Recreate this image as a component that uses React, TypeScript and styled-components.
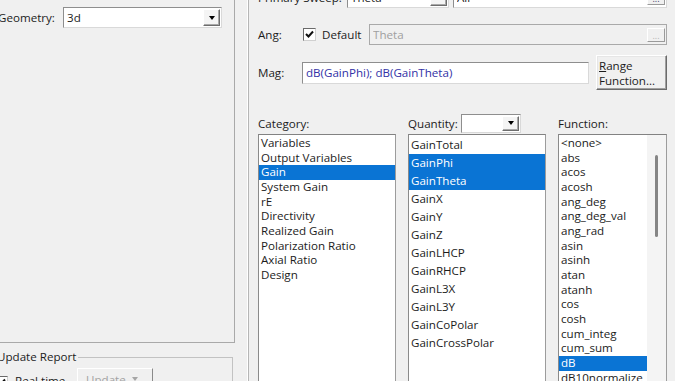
import React from "react";
import styled, { createGlobalStyle } from "styled-components";

const GlobalStyle = createGlobalStyle`
  html, body {
    margin: 0;
    padding: 0;
    background: #f0f0f0;
  }
  body {
    overflow: hidden;
    font-family: "Open Sans", "Noto Sans", sans-serif;
    font-size: 11.6px;
    color: #1c1c1c;
  }
`;

const Page = styled.div`
  display: flex;
  width: 675px;
  height: 381px;
  overflow: hidden;
  background: #f0f0f0;
`;

/* ---------- left side ---------- */

const LeftPane = styled.div`
  width: 235px;
  flex-shrink: 0;
  display: flex;
  flex-direction: column;
`;

const SettingsGroup = styled.div`
  height: 343px;
  flex-shrink: 0;
  box-sizing: border-box;
  border-right: 1px solid #a9a9a9;
  border-bottom: 1px solid #a9a9a9;
  padding-top: 7px;
`;

const FieldRow = styled.div`
  display: flex;
  align-items: center;
`;

const FieldLabel = styled.span<{ $w: number; $shift?: number }>`
  width: ${({ $w }) => $w}px;
  margin-left: ${({ $shift }) => $shift ?? 0}px;
  flex-shrink: 0;
  white-space: nowrap;
`;

const ComboBox = styled.div<{ $w: number; $h?: number }>`
  display: flex;
  width: ${({ $w }) => $w}px;
  height: ${({ $h }) => $h ?? 21}px;
  flex-shrink: 0;
  box-sizing: border-box;
  background: #fff;
  border: 1px solid #8e8e8e;
  border-right-color: #d9d9d9;
  border-bottom-color: #d9d9d9;
  padding: 1px;
`;

const ComboText = styled.span`
  flex: 1;
  display: flex;
  align-items: center;
  padding-left: 2px;
  white-space: nowrap;
`;

const DropButton = styled.span`
  width: 17px;
  box-sizing: border-box;
  display: flex;
  align-items: center;
  justify-content: center;
  background: #f4f4f4;
  border: 1px solid;
  border-color: #fff #6d6d6d #6d6d6d #fff;
  box-shadow: inset -1px -1px #a8a8a8;
`;

const DownArrow = styled.span<{ $muted?: boolean }>`
  width: 0;
  height: 0;
  border-left: 3.5px solid transparent;
  border-right: 3.5px solid transparent;
  border-top: 4px solid ${({ $muted }) => ($muted ? "#a6a6a6" : "#000")};
`;

const UpdateGroup = styled.fieldset`
  margin: 6px 2px 0 -12px;
  padding: 0 6px;
  min-width: 0;
  border: 1px solid #c2c2c2;
  flex: 1;
`;

const GroupLegend = styled.legend`
  padding: 0 2px;
  line-height: 16px;
`;

const UpdateRow = styled.div`
  display: flex;
  align-items: flex-start;
  margin-top: 3px;
`;

const CheckBox = styled.span<{ $top?: number }>`
  width: 13px;
  height: 13px;
  flex-shrink: 0;
  margin-top: ${({ $top }) => $top ?? 0}px;
  box-sizing: border-box;
  background: #fff;
  border: 1px solid #6a6a6a;
  border-right-color: #d0d0d0;
  border-bottom-color: #d0d0d0;
  display: flex;
  align-items: center;
  justify-content: center;
`;

const CheckLabel = styled.span<{ $w: number; $gap: number; $top?: number }>`
  width: ${({ $w }) => $w}px;
  margin-left: ${({ $gap }) => $gap}px;
  margin-top: ${({ $top }) => $top ?? 0}px;
  flex-shrink: 0;
  white-space: nowrap;
  line-height: 16px;
`;

const SplitButton = styled.span`
  width: 76px;
  height: 22px;
  box-sizing: border-box;
  display: flex;
  align-items: center;
  gap: 6px;
  padding-left: 8px;
  color: #a3a3a3;
  background: #f0f0f0;
  border: 1px solid;
  border-color: #fff #8a8a8a #8a8a8a #fff;
`;

/* ---------- right side ---------- */

const RightPane = styled.div`
  flex: 1;
  margin-left: 13px;
  border-left: 1px solid #b6b6b6;
  box-shadow: -1px 0 0 #fff;
  padding: 0 8px 0 9px;
  display: flex;
  flex-direction: column;
  min-width: 0;
`;

const FormRow = styled.div<{ $top: number; $h: number; $gap?: number }>`
  display: flex;
  align-items: center;
  height: ${({ $h }) => $h}px;
  margin-top: ${({ $top }) => $top}px;
  gap: ${({ $gap }) => $gap ?? 0}px;
  flex-shrink: 0;
`;

const TextField = styled.div<{ $h: number; $disabled?: boolean; $ink?: string }>`
  flex: 1;
  min-width: 0;
  display: flex;
  align-items: center;
  height: ${({ $h }) => $h}px;
  box-sizing: border-box;
  padding: 0 1px 0 3px;
  background: ${({ $disabled }) => ($disabled ? "#f0f0f0" : "#fff")};
  border: 1px solid ${({ $disabled }) => ($disabled ? "#a9a9a9" : "#8e8e8e")};
  border-right-color: ${({ $disabled }) => ($disabled ? "#a9a9a9" : "#d9d9d9")};
  border-bottom-color: ${({ $disabled }) => ($disabled ? "#a9a9a9" : "#d9d9d9")};
  color: ${({ $disabled, $ink }) => ($disabled ? "#a0a0a0" : $ink ?? "#1c1c1c")};
`;

const FieldText = styled.span`
  flex: 1;
  white-space: nowrap;
  overflow: hidden;
`;

const EllipsisButton = styled.span<{ $disabled?: boolean }>`
  width: 18px;
  height: 14px;
  box-sizing: border-box;
  display: flex;
  align-items: flex-end;
  justify-content: center;
  font-size: 9px;
  line-height: 10px;
  color: ${({ $disabled }) => ($disabled ? "#b5b5b5" : "#3b3b6b")};
  background: #f0f0f0;
  border: 1px solid;
  border-color: #fff #9a9a9a #9a9a9a #fff;
`;

const PushButton = styled.button`
  width: 71px;
  height: 35px;
  flex-shrink: 0;
  box-sizing: border-box;
  font: inherit;
  color: #1c1c1c;
  text-align: left;
  line-height: 15px;
  padding: 0 2px;
  background: #f0f0f0;
  border: 1px solid;
  border-color: #fff #6b6b6b #6b6b6b #fff;
  box-shadow: inset -1px -1px #a0a0a0, inset 1px 1px #e6e6e6;
`;

const ListsGrid = styled.div`
  display: grid;
  grid-template-columns: 138px 138px 109px;
  column-gap: 12px;
  margin-top: 22px;
`;

const ListColumn = styled.div`
  display: flex;
  flex-direction: column;
`;

const ListHeader = styled.div`
  height: 22px;
  display: flex;
  align-items: center;
`;

const ListBox = styled.div`
  height: 260px;
  display: flex;
  box-sizing: border-box;
  overflow: hidden;
  background: #fff;
  border: 1px solid #9c9c9c;
  border-top-color: #828282;
  border-left-color: #8a8a8a;
`;

const ListItems = styled.div`
  flex: 1;
  min-width: 0;
  padding-top: 1px;
`;

const ListItem = styled.div<{ $lh: number; $selected?: boolean }>`
  height: ${({ $lh }) => $lh}px;
  line-height: ${({ $lh }) => $lh}px;
  padding-left: 2px;
  white-space: nowrap;
  color: ${({ $selected }) => ($selected ? "#fff" : "#1c1c1c")};
  background: ${({ $selected }) => ($selected ? "#0a74d4" : "transparent")};
`;

const ScrollTrack = styled.div`
  width: 19px;
  flex-shrink: 0;
  background: #f4f4f4;
  display: flex;
  justify-content: center;
  padding-top: 20px;
`;

const ScrollThumb = styled.div`
  width: 3px;
  height: 82px;
  border-radius: 2px;
  background: #858585;
`;

const categories = [
  "Variables",
  "Output Variables",
  "Gain",
  "System Gain",
  "rE",
  "Directivity",
  "Realized Gain",
  "Polarization Ratio",
  "Axial Ratio",
  "Design",
];

const quantities = [
  "GainTotal",
  "GainPhi",
  "GainTheta",
  "GainX",
  "GainY",
  "GainZ",
  "GainLHCP",
  "GainRHCP",
  "GainL3X",
  "GainL3Y",
  "GainCoPolar",
  "GainCrossPolar",
];

const functions = [
  "<none>",
  "abs",
  "acos",
  "acosh",
  "ang_deg",
  "ang_deg_val",
  "ang_rad",
  "asin",
  "asinh",
  "atan",
  "atanh",
  "cos",
  "cosh",
  "cum_integ",
  "cum_sum",
  "dB",
  "dB10normalize",
];

const Tick = () => (
  <svg width="9" height="9" viewBox="0 0 9 9">
    <polyline points="1,4 3.5,6.5 8,1.5" fill="none" stroke="#111" strokeWidth="2" />
  </svg>
);

const App = () => {
  return (
    <Page>
      <GlobalStyle />
      <LeftPane>
        <SettingsGroup>
          <FieldRow>
            <FieldLabel $w={65} $shift={-2}>Geometry:</FieldLabel>
            <ComboBox $w={159}>
              <ComboText>3d</ComboText>
              <DropButton><DownArrow /></DropButton>
            </ComboBox>
          </FieldRow>
        </SettingsGroup>
        <UpdateGroup>
          <GroupLegend>Update Report</GroupLegend>
          <UpdateRow>
            <CheckBox $top={8}><Tick /></CheckBox>
            <CheckLabel $w={62} $gap={7} $top={5}>Real time</CheckLabel>
            <SplitButton>Update <DownArrow $muted /></SplitButton>
          </UpdateRow>
        </UpdateGroup>
      </LeftPane>

      <RightPane>
        <FormRow $top={-13} $h={21}>
          <FieldLabel $w={89}>Primary Sweep:</FieldLabel>
          <ComboBox $w={102}>
            <ComboText>Theta</ComboText>
            <DropButton><DownArrow /></DropButton>
          </ComboBox>
          <FieldLabel $w={4} />
          <TextField $h={21}>
            <FieldText>All</FieldText>
            <EllipsisButton>...</EllipsisButton>
          </TextField>
        </FormRow>

        <FormRow $top={16} $h={21}>
          <FieldLabel $w={45}>Ang:</FieldLabel>
          <CheckBox><Tick /></CheckBox>
          <CheckLabel $w={47} $gap={6}>Default</CheckLabel>
          <TextField $h={21} $disabled>
            <FieldText>Theta</FieldText>
            <EllipsisButton $disabled>...</EllipsisButton>
          </TextField>
        </FormRow>

        <FormRow $top={10} $h={35} $gap={7}>
          <FieldLabel $w={37}>Mag:</FieldLabel>
          <TextField $h={22} $ink="#3232a6">
            <FieldText>dB(GainPhi); dB(GainTheta)</FieldText>
          </TextField>
          <PushButton>
            <u>R</u>ange
            <br />
            Function...
          </PushButton>
        </FormRow>

        <ListsGrid>
          <ListColumn>
            <ListHeader>Category:</ListHeader>
            <ListBox>
              <ListItems>
                {categories.map((c) => (
                  <ListItem key={c} $lh={14.67} $selected={c === "Gain"}>{c}</ListItem>
                ))}
              </ListItems>
            </ListBox>
          </ListColumn>

          <ListColumn>
            <ListHeader>
              <FieldLabel $w={53}>Quantity:</FieldLabel>
              <ComboBox $w={60} $h={19}>
                <ComboText />
                <DropButton><DownArrow /></DropButton>
              </ComboBox>
            </ListHeader>
            <ListBox>
              <ListItems>
                {quantities.map((q) => (
                  <ListItem key={q} $lh={18} $selected={q === "GainPhi" || q === "GainTheta"}>{q}</ListItem>
                ))}
              </ListItems>
            </ListBox>
          </ListColumn>

          <ListColumn>
            <ListHeader>Function:</ListHeader>
            <ListBox>
              <ListItems>
                {functions.map((f) => (
                  <ListItem key={f} $lh={14.67} $selected={f === "dB"}>{f}</ListItem>
                ))}
              </ListItems>
              <ScrollTrack>
                <ScrollThumb />
              </ScrollTrack>
            </ListBox>
          </ListColumn>
        </ListsGrid>
      </RightPane>
    </Page>
  );
};

export default App;
